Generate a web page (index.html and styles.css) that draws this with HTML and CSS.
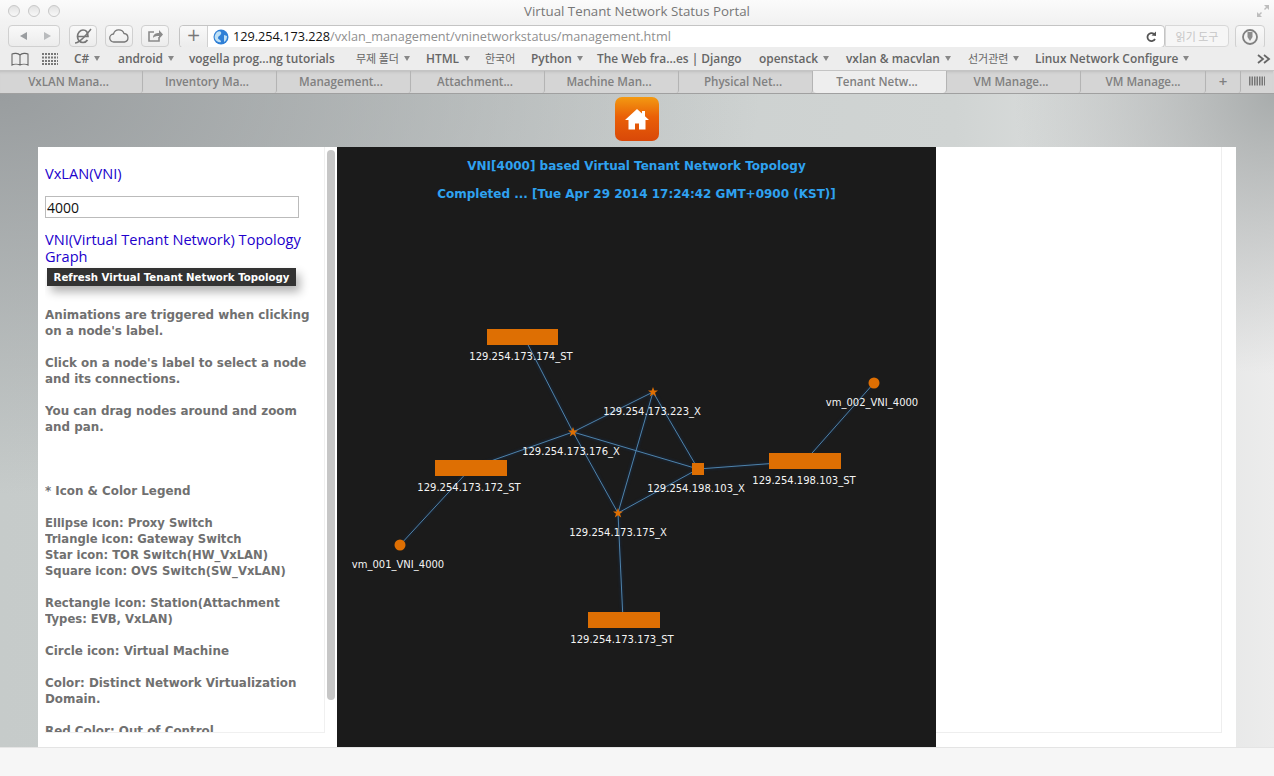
FILE: index.html
```html
<!DOCTYPE html>
<html lang="en">
<head>
    <meta charset="UTF-8">
    <title>Virtual Tenant Network Status Portal</title>
    <link rel="stylesheet" href="styles.css">
</head>
<body>
    <div class="window-bar">
        <div class="lights"><span></span><span></span><span></span></div>
        <div class="window-title">Virtual Tenant Network Status Portal</div>
        <svg class="resize-icon" width="14" height="14" viewBox="0 0 14 14"><path d="M8 1h5v5l-2-2-2 2-1-1 2-2zM1 8l2 2 2-2 1 1-2 2 2 2H1z" fill="#bdbdbd"/></svg>
    </div>

    <div class="toolbar">
        <div class="btn btn-nav">
            <svg width="50" height="20" viewBox="0 0 50 20"><path d="M18 6v8l-7-4z" fill="#9a9da0"/><path d="M35 6v8l7-4z" fill="#b9bbbd"/></svg>
        </div>
        <div class="btn btn-icon">
            <svg width="24" height="20" viewBox="0 0 24 20"><path d="M7 10.500h10c0-4-2-6.500-5-6.500s-5.500 3-5.500 6.500 2.500 6 5.500 6c2 0 3.500-1 4.500-2.500" fill="none" stroke="#777" stroke-width="1.700"/><path d="M4 17c3 0 9-5 16-14" fill="none" stroke="#777" stroke-width="1.500"/></svg>
        </div>
        <div class="btn btn-icon">
            <svg width="24" height="20" viewBox="0 0 24 20"><path d="M7 16a4 4 0 0 1-.5-8A5.500 5.500 0 0 1 17 7.500 4.300 4.300 0 0 1 17.500 16z" fill="none" stroke="#777" stroke-width="1.300"/></svg>
        </div>
        <div class="btn btn-icon">
            <svg width="24" height="20" viewBox="0 0 24 20"><path d="M16 11v4H6V6h5" fill="none" stroke="#8a8a8a" stroke-width="1.600"/><path d="M10 12c0-4 3-5 6-5V4l4 4.500-4 4.500v-3c-3 0-5 .5-6 2z" fill="#8a8a8a"/></svg>
        </div>
        <div class="address">
            <div class="add-btn">+</div>
            <svg class="globe" width="16" height="16" viewBox="0 0 16 16"><circle cx="8" cy="8" r="7.500" fill="#2f7fd6"/><path d="M4 3c3-2 5 0 4 2S5 7 5 9s3 1 3 4c-2 1-5-1-6-3S2 5 4 3zM11 6l3 1c0 3-1 5-3 6z" fill="#bfe0f5"/></svg>
            <span class="url"><b>129.254.173.228</b>/vxlan_management/vninetworkstatus/management.html</span>
            <svg class="reload" width="12" height="14" viewBox="0 0 12 14"><path d="M10 9a4 4 0 1 1-1-5" fill="none" stroke="#555" stroke-width="1.800"/><path d="M6.500 5.500L11 6V1.500z" fill="#555"/></svg>
        </div>
        <div class="reader">읽기 도구</div>
        <div class="btn btn-download">
            <svg width="20" height="20" viewBox="0 0 20 20"><circle cx="10" cy="10" r="7" fill="none" stroke="#808080" stroke-width="1.800"/><path d="M7.500 5h5v5l-2.500 4-2.500-4z" fill="#8c8c8c"/></svg>
        </div>
    </div>

    <div class="bookmarks">
        <svg class="bm-book" width="20" height="14" viewBox="0 0 20 14"><path d="M10 3C8 1 4 1 2 2v11c2-1 6-1 8 0 2-1 6-1 8 0V2c-2-1-6-1-8 1zM10 3v10" fill="none" stroke="#666" stroke-width="1.100"/></svg>
        <svg class="bm-grid" width="16" height="12" viewBox="0 0 16 12"><path d="M0 1h16M0 4.500h16M0 8h16M0 11h16" stroke="#777" stroke-width="2.200" stroke-dasharray="2 1"/></svg>
        <span class="bm bm-menu bm-cs">C#</span>
        <span class="bm bm-menu bm-android">android</span>
        <span class="bm bm-vogella">vogella prog...ng tutorials</span>
        <span class="bm bm-menu bm-folder">무제 폴더</span>
        <span class="bm bm-menu bm-html">HTML</span>
        <span class="bm bm-kr">한국어</span>
        <span class="bm bm-menu bm-python">Python</span>
        <span class="bm bm-web">The Web fra...es | Django</span>
        <span class="bm bm-menu bm-openstack">openstack</span>
        <span class="bm bm-menu bm-vxlan">vxlan &amp; macvlan</span>
        <span class="bm bm-menu bm-election">선거관련</span>
        <span class="bm bm-menu bm-linux">Linux Network Configure</span>
        <svg class="bm-more" width="14" height="10" viewBox="0 0 14 10"><path d="M1 1l5 4-5 4M7 1l5 4-5 4" fill="none" stroke="#666" stroke-width="1.800"/></svg>
    </div>

    <div class="tabs">
        <div class="tab tab-first">VxLAN Mana...</div>
        <div class="tab">Inventory Ma...</div>
        <div class="tab">Management...</div>
        <div class="tab">Attachment...</div>
        <div class="tab">Machine Man...</div>
        <div class="tab">Physical Net...</div>
        <div class="tab tab-active">Tenant Netw...</div>
        <div class="tab">VM Manage...</div>
        <div class="tab tab-last">VM Manage...</div>
        <div class="tab tab-add">+</div>
        <div class="tab tab-list">
            <svg width="16" height="10" viewBox="0 0 16 10"><path d="M0 5h16" stroke="#777" stroke-width="9" stroke-dasharray="1.500 1"/></svg>
        </div>
    </div>

    <div class="page">
        <div class="home-row">
            <div class="home-btn">
                <svg width="24" height="22" viewBox="0 0 24 22"><path d="M12 1L0 12h3.500v9.500h6.500v-6h4v6h6.500V12H24l-4-3.700V3h-3v2.500z" fill="#fff"/></svg>
            </div>
        </div>
        <div class="card">
            <div class="side-wrap">
                <div class="side">
                    <div class="side-label side-vni">VxLAN(VNI)</div>
                    <input class="vni-input" type="text" value="4000">
                    <div class="side-label">VNI(Virtual Tenant Network) Topology Graph</div>
                    <button class="refresh-btn">Refresh Virtual Tenant Network Topology</button>
                    <p>Animations are triggered when clicking on a node's label.</p>
                    <p>Click on a node's label to select a node and its connections.</p>
                    <p>You can drag nodes around and zoom and pan.</p>
                    <p class="legend-head">* Icon &amp; Color Legend</p>
                    <p class="legend-list">Ellipse icon: Proxy Switch<br>Triangle icon: Gateway Switch<br>Star icon: TOR Switch(HW_VxLAN)<br>Square icon: OVS Switch(SW_VxLAN)</p>
                    <p class="legend-list">Rectangle icon: Station(Attachment Types: EVB, VxLAN)</p>
                    <p>Circle icon: Virtual Machine</p>
                    <p>Color: Distinct Network Virtualization Domain.</p>
                    <p>Red Color: Out of Control</p>
                </div>
                <div class="scroll-track"><div class="scroll-thumb"></div></div>
            </div>
            <div class="graph">
                <div class="graph-title">VNI[4000] based Virtual Tenant Network Topology</div>
                <div class="graph-title">Completed ... [Tue Apr 29 2014 17:24:42 GMT+0900 (KST)]</div>
                <svg class="graph-canvas" width="599" height="600" viewBox="337 147 599 600">
                    <g class="edges">
                        <line x1="524" y1="337" x2="573" y2="432"/>
                        <line x1="471" y1="468" x2="573" y2="432"/>
                        <line x1="653" y1="392" x2="573" y2="432"/>
                        <line x1="653" y1="392" x2="698" y2="469"/>
                        <line x1="653" y1="392" x2="618" y2="513"/>
                        <line x1="573" y1="432" x2="698" y2="469"/>
                        <line x1="573" y1="432" x2="618" y2="513"/>
                        <line x1="618" y1="513" x2="698" y2="469"/>
                        <line x1="698" y1="469" x2="805" y2="461"/>
                        <line x1="805" y1="461" x2="874" y2="383"/>
                        <line x1="471" y1="468" x2="400" y2="545"/>
                        <line x1="618" y1="513" x2="623" y2="620"/>
                    </g>
                    <g class="nodes">
                        <rect x="487" y="329" width="71" height="16"/>
                        <rect x="435" y="460" width="72" height="16"/>
                        <rect x="769" y="453" width="72" height="16"/>
                        <rect x="588" y="612" width="72" height="16"/>
                        <rect x="692" y="463" width="12" height="12"/>
                        <circle cx="874" cy="383" r="5.500"/>
                        <circle cx="400" cy="545" r="5.500"/>
                        <polygon points="653,387 654.300,390.500 658,390.500 655,392.800 656.200,396.500 653,394.300 649.800,396.500 651,392.800 648,390.500 651.700,390.500"/>
                        <polygon points="573,427 574.300,430.500 578,430.500 575,432.800 576.200,436.500 573,434.300 569.800,436.500 571,432.800 568,430.500 571.700,430.500"/>
                        <polygon points="618,508 619.300,511.500 623,511.500 620,513.800 621.200,517.500 618,515.300 614.800,517.500 616,513.800 613,511.500 616.700,511.500"/>
                    </g>
                    <g class="labels">
                        <text x="521" y="360">129.254.173.174_ST</text>
                        <text x="652" y="415">129.254.173.223_X</text>
                        <text x="571" y="455">129.254.173.176_X</text>
                        <text x="696" y="492">129.254.198.103_X</text>
                        <text x="804" y="484">129.254.198.103_ST</text>
                        <text x="872" y="406">vm_002_VNI_4000</text>
                        <text x="469" y="491">129.254.173.172_ST</text>
                        <text x="398" y="568">vm_001_VNI_4000</text>
                        <text x="618" y="536">129.254.173.175_X</text>
                        <text x="622" y="643">129.254.173.173_ST</text>
                    </g>
                </svg>
            </div>
            <div class="right-panel"></div>
        </div>
    </div>
    <div class="footer"></div>
</body>
</html>
```

FILE: styles.css
```css
* {
    box-sizing: border-box;
}
html, body {
    margin: 0;
    height: 776px;
    overflow: hidden;
}
body {
    font-family: "DejaVu Sans", sans-serif;
    background-color: #f6f6f6;
}

/* browser chrome */
.window-bar {
    height: 22px;
    display: flex;
    align-items: center;
    justify-content: center;
    position: relative;
    background: linear-gradient(#fbfbfb, #f2f2f2);
}
.lights {
    position: absolute;
    left: 8px;
    top: 5px;
    display: flex;
    gap: 8px;
}
.lights span {
    width: 12px;
    height: 12px;
    border-radius: 50%;
    border: 1px solid #c8c8c8;
    background: linear-gradient(#e2e2e2, #f8f8f8);
}
.window-title {
    font-family: "Open Sans", sans-serif;
    font-size: 13.3px;
    color: #777;
}
.resize-icon {
    position: absolute;
    right: 4px;
    top: 4px;
}
.toolbar {
    height: 25px;
    display: flex;
    align-items: flex-start;
    padding: 3px 8px 0 8px;
    background: linear-gradient(#f2f2f2, #ededed);
}
.btn {
    height: 22px;
    display: flex;
    align-items: center;
    justify-content: center;
    border: 1px solid #d0d0d0;
    border-radius: 4px;
    background: linear-gradient(#f9f9f9, #ececec);
}
.btn-nav {
    width: 52px;
    margin-right: 9px;
}
.btn-icon {
    width: 28px;
    margin-right: 8px;
}
.btn-download {
    width: 30px;
    margin-left: 6px;
    height: 24px;
}
.address {
    width: 986px;
    height: 23px;
    margin-left: 2px;
    display: flex;
    align-items: center;
    background-color: #fff;
    border: 1px solid #c4c4c4;
    border-radius: 4px;
}
.add-btn {
    width: 28px;
    height: 21px;
    line-height: 19px;
    text-align: center;
    font-size: 17px;
    color: #777;
    background: linear-gradient(#f9f9f9, #ececec);
    border-right: 1px solid #d0d0d0;
    border-radius: 4px 0 0 4px;
}
.globe {
    margin-left: 5px;
}
.url {
    margin-left: 4px;
    padding-bottom: 2px;
    flex: 1;
    font-family: "Open Sans", sans-serif;
    font-size: 12.7px;
    color: #8f8f8f;
    white-space: nowrap;
}
.url b {
    font-weight: 400;
    color: #111;
}
.reload {
    margin-right: 7px;
}
.reader {
    width: 64px;
    height: 22px;
    line-height: 20px;
    text-align: center;
    font-family: "Noto Sans CJK KR", sans-serif;
    font-size: 11px;
    color: #c6c6c6;
    background: #f6f6f6;
    border: 1px solid #d8d8d8;
    border-radius: 0 4px 4px 0;
}
.bookmarks {
    height: 24px;
    position: relative;
    background: #ededed;
    border-bottom: 1px solid #c4c4c4;
    font-family: "Open Sans", sans-serif;
    font-size: 11.9px;
    font-weight: 600;
    color: #666;
}
/* bookmark items sit at their own spots along the bar */
.bm, .bm-book, .bm-grid, .bm-more {
    position: absolute;
    top: 3px;
    white-space: nowrap;
}
.bm-book { left: 10px; top: 5px; }
.bm-grid { left: 42px; top: 6px; }
.bm-cs { left: 74px; }
.bm-android { left: 118px; }
.bm-vogella { left: 189px; }
.bm-folder { left: 356px; font-family: "Noto Sans CJK KR", sans-serif; font-weight: 400; font-size: 11px; }
.bm-html { left: 426px; }
.bm-kr { left: 485px; font-family: "Noto Sans CJK KR", sans-serif; font-weight: 400; font-size: 11px; }
.bm-python { left: 531px; }
.bm-web { left: 597px; }
.bm-openstack { left: 759px; }
.bm-vxlan { left: 846px; }
.bm-election { left: 968px; font-family: "Noto Sans CJK KR", sans-serif; font-weight: 400; font-size: 11px; }
.bm-linux { left: 1035px; }
.bm-more { left: 1257px; top: 7px; }
.bm-menu::after {
    content: "";
    display: inline-block;
    margin-left: 5px;
    vertical-align: 2px;
    border-left: 3.5px solid transparent;
    border-right: 3.5px solid transparent;
    border-top: 5px solid #888;
}
.tabs {
    height: 23px;
    display: flex;
    background: #d5d5d5;
    border-bottom: 1px solid #a0a0a0;
    font-family: "Open Sans", sans-serif;
    font-size: 11.6px;
    font-weight: 600;
    color: #808080;
}
.tab {
    width: 134px;
    padding-right: 5px;
    flex-shrink: 0;
    line-height: 21px;
    text-align: center;
    white-space: nowrap;
    border-right: 1px solid #b4b4b4;
    border-bottom-right-radius: 3px;
    box-shadow: inset 0 3px 3px -2px #bdbdbd;
}
.tab-first {
    width: 143px;
}
.tab-last {
    width: 125px;
    padding-right: 0;
}
.tab-active {
    background: #eeeeee;
    box-shadow: none;
    border-radius: 0 0 4px 4px;
}
.tab-add {
    width: 35px;
    padding-right: 0;
    font-size: 15px;
}
.tab-list {
    width: 32px;
    padding-right: 0;
    border-right: none;
}

/* page */
.page {
    height: 653px;
    background:
        radial-gradient(ellipse 760px 400px at 0 0, #999d9f, rgba(153, 157, 159, 0)),
        radial-gradient(ellipse 260px 280px at 100% 0, rgba(165, 169, 169, 0.95), rgba(165, 169, 169, 0)),
        linear-gradient(to right, #c6cbca, #d0d4d3 75%, #ececec);
}
.home-row {
    height: 53px;
    padding-top: 3px;
    display: flex;
    justify-content: center;
}
.home-btn {
    width: 44px;
    height: 44px;
    display: flex;
    align-items: center;
    justify-content: center;
    border-radius: 7px;
    background: linear-gradient(#f39a12, #ea6007 45%, #d94808);
}
.card {
    margin-left: 38px;
    width: 1198px;
    height: 600px;
    display: flex;
    background-color: #fff;
}
.side-wrap {
    width: 299px;
    height: 586px;
    padding-left: 7px;
    display: flex;
    flex-shrink: 0;
}
.side {
    width: 280px;
    height: 586px;
    overflow: hidden;
    border-right: 1px solid #f0f0f0;
    border-bottom: 1px solid #f0f0f0;
    font-weight: 700;
    color: #707070;
}
.side p {
    margin: 0 0 16px 0;
    max-width: 270px;
    font-size: 11.9px;
    line-height: 16px;
}
.side p.legend-list {
    font-size: 11.6px;
}
.side-label {
    font-family: "Open Sans", sans-serif;
    font-weight: 400;
    font-size: 14.6px;
    line-height: 17px;
    color: #2200cc;
}
.side-vni {
    padding-top: 18px;
}
.vni-input {
    display: block;
    width: 254px;
    height: 22px;
    margin: 14px 0 13px 0;
    padding: 1px 1px;
    border: 1px solid #bbb;
    font-family: "Open Sans", sans-serif;
    font-size: 14px;
    color: #111;
}
.refresh-btn {
    display: block;
    width: 249px;
    height: 18px;
    margin: 3px 0 21px 2px;
    padding: 0;
    border: none;
    background-color: #333;
    color: #fff;
    font-family: "DejaVu Sans", sans-serif;
    font-weight: 700;
    font-size: 10.2px;
    white-space: nowrap;
    box-shadow: 4px 6px 10px rgba(0, 0, 0, 0.3);
}
.side p.legend-head {
    margin-top: 48px;
}
.scroll-track {
    width: 12px;
    padding: 3px 2px 0 2px;
}
.scroll-thumb {
    width: 8px;
    height: 550px;
    border-radius: 4px;
    background-color: #c6c6c6;
}
.graph {
    width: 599px;
    height: 600px;
    position: relative;
    background-color: #1b1b1b;
    flex-shrink: 0;
}
.graph-title {
    padding-top: 12px;
    height: 28px;
    line-height: 14px;
    text-align: center;
    font-size: 12px;
    font-weight: 700;
    color: #2fa2f0;
}
.graph-canvas {
    position: absolute;
    left: 0;
    top: 0;
}
.edges {
    filter: drop-shadow(0 0 1.5px #12386a);
}
.edges line {
    stroke: #4f83aa;
    stroke-width: 1;
}
.nodes rect, .nodes circle, .nodes polygon {
    fill: #de6f03;
}
.labels text {
    fill: #f4f4f4;
    font-family: "DejaVu Sans", sans-serif;
    font-size: 10px;
    text-anchor: middle;
}
.right-panel {
    width: 286px;
    height: 586px;
    border-right: 1px solid #eee;
    border-bottom: 1px solid #eee;
}
.footer {
    height: 29px;
    background-color: #f6f6f6;
    border-top: 1px solid #e4e4e4;
}
```
